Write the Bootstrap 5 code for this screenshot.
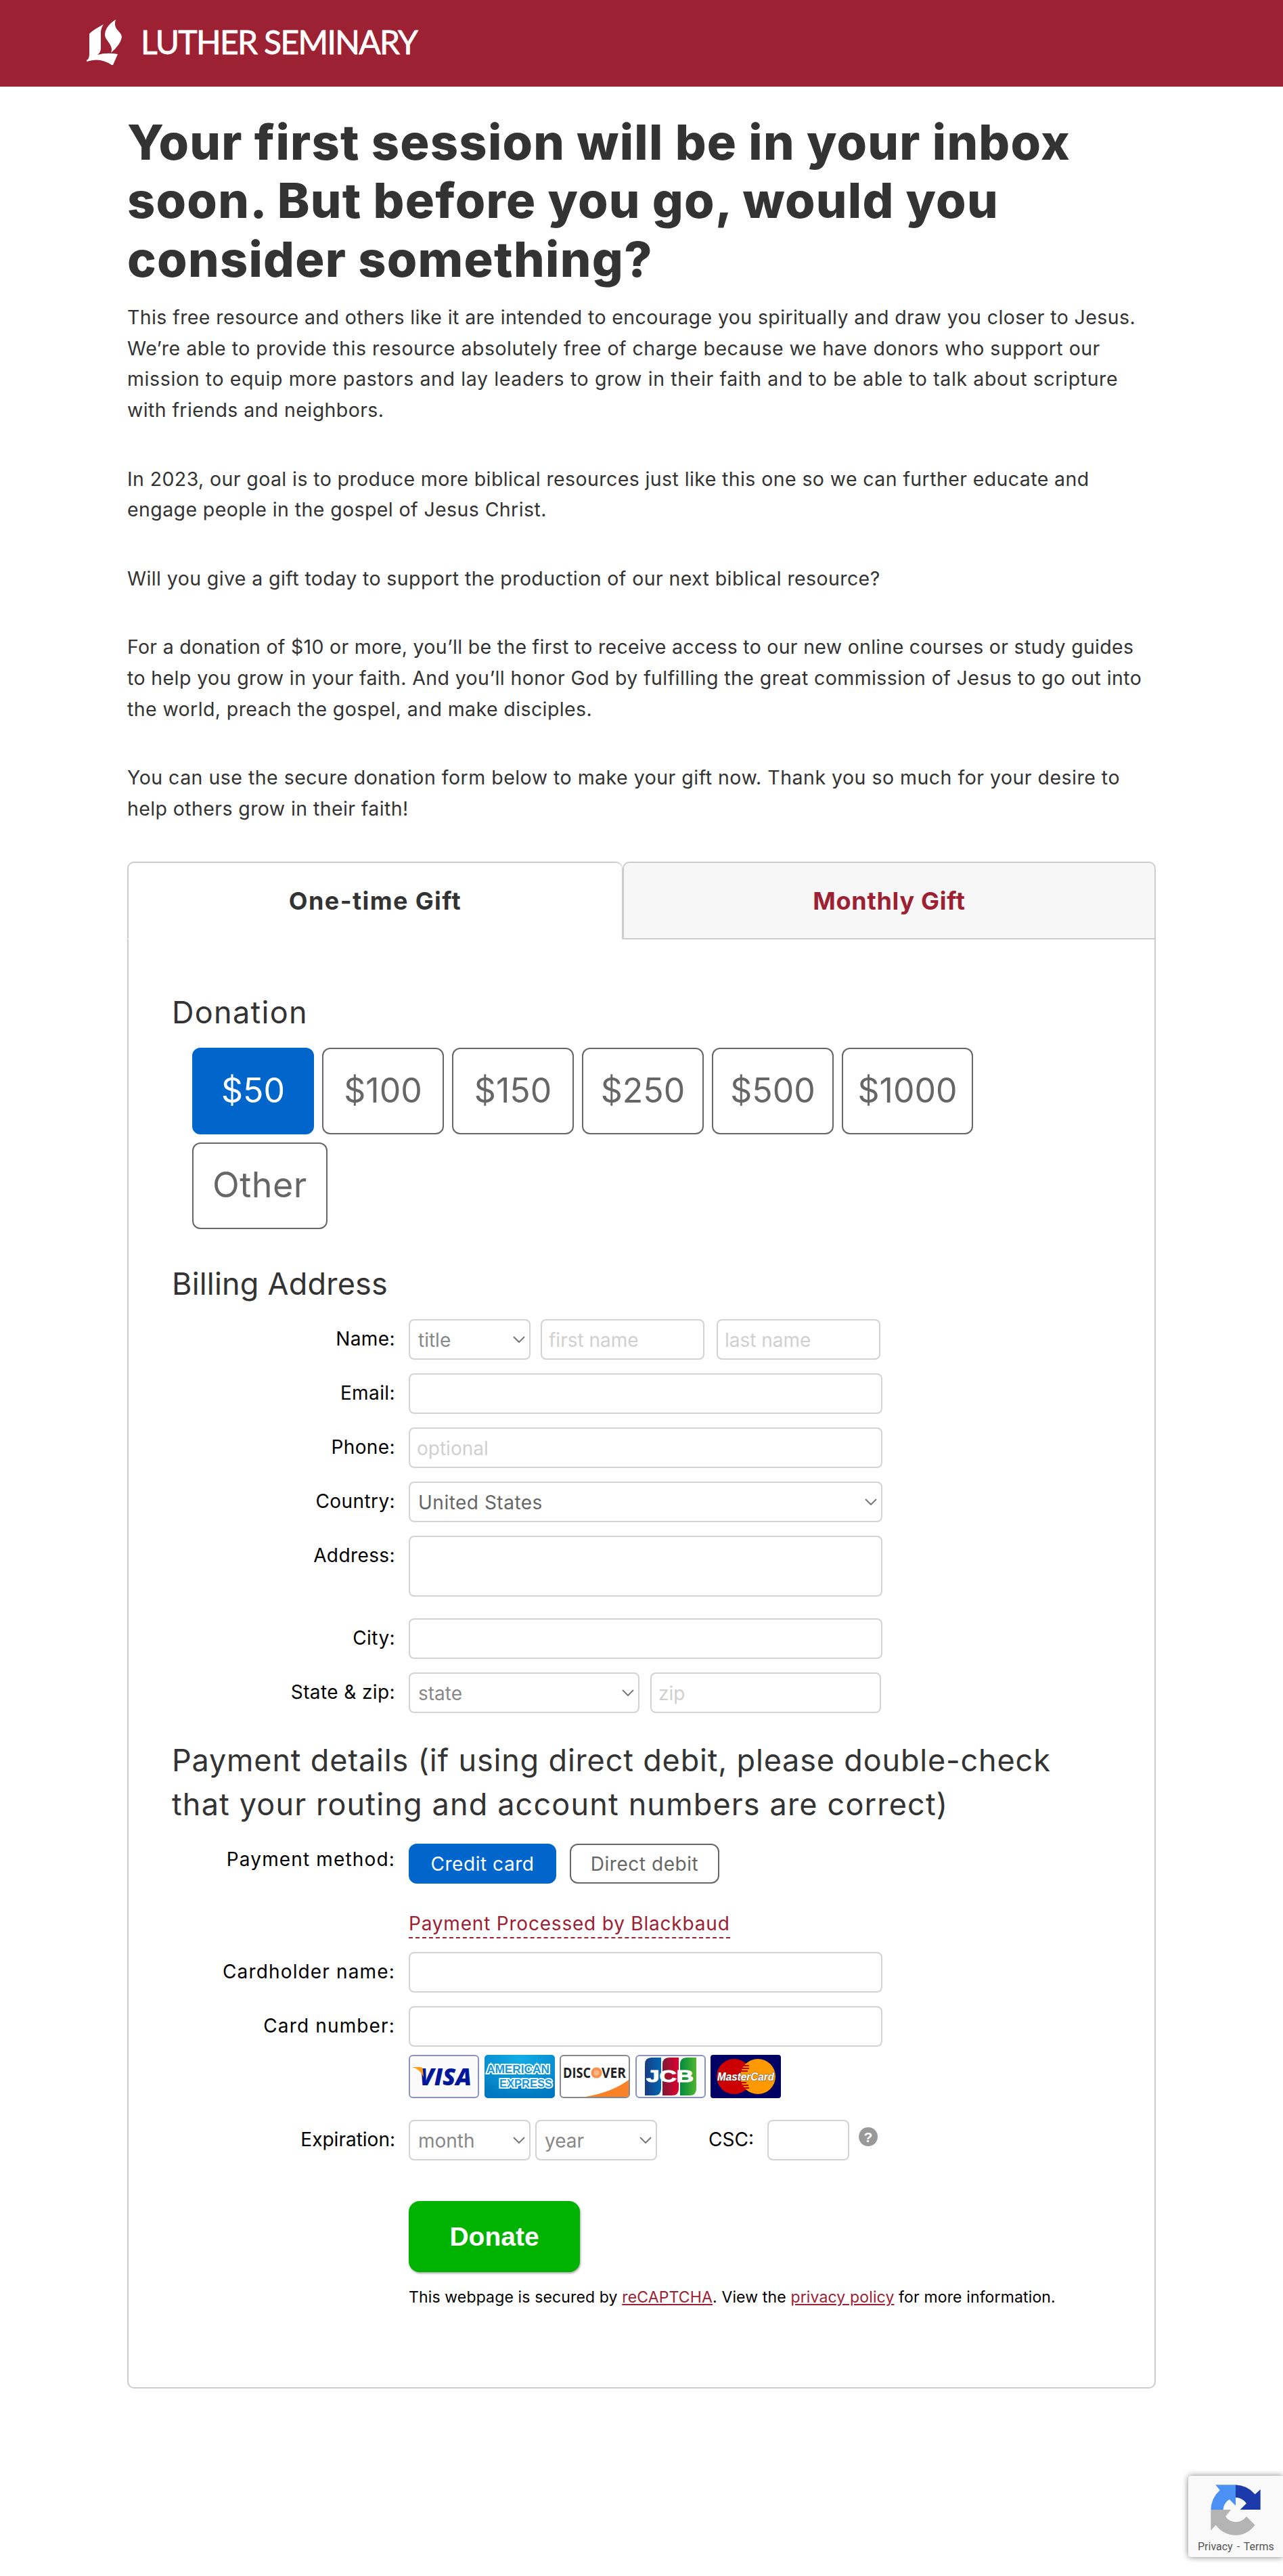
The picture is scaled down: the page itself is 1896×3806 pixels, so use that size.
<!DOCTYPE html>
<html lang="en">
<head>
  <meta charset="UTF-8" />
  <meta name="viewport" content="width=device-width, initial-scale=1.0"/>
  <title>Luther Seminary - Donate</title>
  <link href="https://cdn.jsdelivr.net/npm/bootstrap@5.3.2/dist/css/bootstrap.min.css" rel="stylesheet" />
  <style>
    body {
      font-family: Inter, "Open Sans", sans-serif;
      font-size: 28px;
      color: #333;
      background: #fff;
      min-height: 3806px;
    }
    a { color: #9b2133; }
    .site-header { background: #9b2133; height: 128px; padding-left: 128px; }
    .page { width: 1520px; margin-left: 188px; padding-top: 39px; }
    h1 {
      font-size: 72px;
      font-weight: 800;
      letter-spacing: 1.25px;
      line-height: 86.4px;
      margin-bottom: 20px;
      white-space: nowrap;
    }
    .intro { height: 827px; }
    .intro p {
      font-size: 28.5px;
      line-height: 45.6px;
      letter-spacing: .4px;
      margin-bottom: 56px;
      white-space: nowrap;
    }
    .intro .tight { letter-spacing: .29px; }
    .intro .loose { letter-spacing: .49px; }
    .intro .looser { letter-spacing: .62px; }

    /* gift tabs */
    .gift-tab {
      height: 115px;
      border: 2px solid #ccc;
      border-radius: 10px 10px 0 0;
      font-size: 36px;
      font-weight: 700;
      text-decoration: none;
    }
    .gift-tab.current {
      width: 732px;
      color: #333;
      letter-spacing: 1.4px;
      border-bottom-color: #fff;
      border-right-width: 1px;
    }
    .gift-tab.other { width: 788px; background: #f7f7f7; letter-spacing: .7px; }
    .gift-panel {
      border: 2px solid #ccc;
      border-top: 0;
      border-radius: 0 0 10px 10px;
      height: 2141px;
      padding: 75px 64px 0;
    }
    h2 {
      font-size: 45px;
      font-weight: 400;
      letter-spacing: .82px;
      line-height: 65px;
      margin: 0;
      white-space: nowrap;
    }
    h2 .second-line { letter-spacing: 1.15px; }
    .donation-title { letter-spacing: 1.3px; }
    .billing-title { letter-spacing: .2px; margin: 48px 0 20px; }
    .payment-title { margin: 37px 0 26px; }

    .amounts { gap: 12px; padding: 20px 0 0 30px; width: 1222px; }
    .amount {
      height: 128px;
      min-width: 180px;
      border: 2px solid #666;
      border-radius: 12px;
      font-size: 50px;
      color: #666;
      background: #fff;
      padding: 0 0 2px;
    }
    .amount.picked, .method.picked { background: #06c; border-color: #06c; color: #fff; }
    .amount.wide { width: 194px; }
    .amount.last { width: 200px; font-size: 52px; letter-spacing: .5px; }

    /* form rows */
    .field-row { margin-bottom: 20px; height: 60px; }
    .field-row.tall { height: 102px; }
    .field-label {
      width: 330px;
      margin-right: 20px;
      text-align: right;
      line-height: 59px;
      letter-spacing: .4px;
      color: #000;
      white-space: nowrap;
      flex: none;
    }
    .payment .wide-label { letter-spacing: 1.15px; }
    .payment .exp-label { letter-spacing: 0; }
    .form-control, .form-select {
      height: 60px;
      width: 700px;
      border: 2px solid #d3d3d3;
      border-radius: 8px;
      font-size: 28px;
      padding: 2px 10px 0;
      flex: none;
    }
    .form-control::placeholder { color: #d0d0d0; opacity: 1; }
    .form-select {
      color: #888;
      padding-left: 12px;
      background-image: url("data:image/svg+xml,%3csvg xmlns='http://www.w3.org/2000/svg' viewBox='0 0 18 10'%3e%3cpath d='M1 1l8 8 8-8' fill='none' stroke='%23777' stroke-width='2'/%3e%3c/svg%3e");
      background-size: 18px 10px;
      background-position: right 6px center;
    }
    .form-select.filled { color: #666; letter-spacing: .5px; }
    textarea.form-control { height: 90px; resize: none; }
    .w-title { width: 180px; }
    .w-name { width: 242px; }
    .w-state { width: 341px; }
    .w-csc { width: 121px; }
    .gap-field { margin-left: 15px; }
    .gap-zip { margin-left: 16px; }
    .gap-last { margin-left: 18px; }
    .gap-year { margin-left: 7px; }

    .method-row { margin-bottom: 38px; }
    .method-row .field-label { line-height: 47px; }
    .method {
      width: 218px;
      height: 59px;
      margin-right: 20px;
      border: 2px solid #666;
      border-radius: 12px;
      background: #fff;
      color: #666;
      padding: 0;
      font-size: 28px;
      letter-spacing: .55px;
    }
    .method.debit { width: 221px; }
    .processed {
      border-bottom: 2px dashed #9b2133;
      text-decoration: none;
      line-height: 40px;
      letter-spacing: .8px;
    }
    .under-label { margin-left: 350px; }
    .processed-row { margin-bottom: 20px; }
    .card-icons { gap: 7.5px; margin-top: -8px; margin-bottom: 32px; }
    .csc-label { width: 143px; }
    .help-icon { margin: 11px 0 0 14px; }
    .donate {
      width: 253px;
      height: 105px;
      margin-top: 60px;
      border: 0;
      border-radius: 16px;
      background: #00b300;
      color: #fff;
      font: bold 39px "Liberation Sans", sans-serif;
      box-shadow: 1px 2px 3px rgba(0, 0, 0, .35);
    }
    .secured {
      font-size: 23px;
      letter-spacing: .14px;
      color: #000;
      white-space: nowrap;
      line-height: 36px;
      margin-top: 19px;
    }

    .recaptcha {
      position: absolute;
      left: 1756px;
      top: 3658px;
      width: 140px;
      height: 120px;
      border-radius: 4px 0 0 4px;
      background: #f9f9f9;
      box-shadow: 0 0 10px #808080;
      font: 16px/20px Roboto, sans-serif;
      color: #555;
      padding: 13px 0 0 14px;
      white-space: nowrap;
      word-spacing: 2px;
    }
    .recaptcha svg { margin: 0 0 7px 19px; }
  </style>
</head>
<body class="position-relative overflow-x-hidden">

<header class="site-header d-flex align-items-center">
  <svg width="500" height="128" viewBox="0 0 500 128" fill="#fff">
    <!-- book and flame -->
    <path d="M4 50Q8 45 25 36Q21 42 21 48V72Q21 77 16 81Q30 77 46 80L39 96H37Q20 84 0 91V89Q4 87 4 80Z"/>
    <path d="M43 29Q28 38 27 51C27 60 41 67 36 78Q50 66 52 55C52 46 38 44 43 29Z"/>
    <text x="80" y="80" font-family="Lato, sans-serif" font-size="48" stroke="#fff" stroke-width=".8" textLength="410">LUTHER SEMINARY</text>
  </svg>
</header>

<main class="page">
  <h1>Your first session will be in your inbox<br>soon. But before you go, would you<br>consider something?</h1>

  <div class="intro">
    <p>This free resource and others like it are intended to encourage you spiritually and draw you closer to Jesus.<br><span class="loose">We’re able to provide this resource absolutely free of charge because we have donors who support our</span><br><span class="looser">mission to equip more pastors and lay leaders to grow in their faith and to be able to talk about scripture</span><br>with friends and neighbors.</p>
    <p>In 2023, our goal is to produce more biblical resources just like this one so we can further educate and<br>engage people in the gospel of Jesus Christ.</p>
    <p>Will you give a gift today to support the production of our next biblical resource?</p>
    <p><span class="tight">For a donation of $10 or more, you’ll be the first to receive access to our new online courses or study guides</span><br>to help you grow in your faith. And you’ll honor God by fulfilling the great commission of Jesus to go out into<br>the world, preach the gospel, and make disciples.</p>
    <p><span class="loose">You can use the secure donation form below to make your gift now. Thank you so much for your desire to</span><br>help others grow in their faith!</p>
  </div>

  <!-- Gift tabs -->
  <div class="d-flex">
    <a class="gift-tab current d-flex align-items-center justify-content-center">One-time Gift</a>
    <a href="#" class="gift-tab other d-flex align-items-center justify-content-center">Monthly Gift</a>
  </div>

  <form class="gift-panel">
    <h2 class="donation-title">Donation</h2>
    <div class="amounts d-flex flex-wrap">
      <button type="button" class="amount picked">$50</button>
      <button type="button" class="amount">$100</button>
      <button type="button" class="amount">$150</button>
      <button type="button" class="amount">$250</button>
      <button type="button" class="amount">$500</button>
      <button type="button" class="amount wide">$1000</button>
      <button type="button" class="amount last">Other</button>
    </div>

    <!-- Billing -->
    <h2 class="billing-title">Billing Address</h2>
    <div class="field-row d-flex">
      <label class="field-label">Name:</label>
      <select class="form-select w-title"><option>title</option></select>
      <input class="form-control w-name gap-field" placeholder="first name">
      <input class="form-control w-name gap-last" placeholder="last name">
    </div>
    <div class="field-row d-flex">
      <label class="field-label">Email:</label>
      <input class="form-control">
    </div>
    <div class="field-row d-flex">
      <label class="field-label">Phone:</label>
      <input class="form-control" placeholder="optional">
    </div>
    <div class="field-row d-flex">
      <label class="field-label">Country:</label>
      <select class="form-select filled"><option>United States</option></select>
    </div>
    <div class="field-row tall d-flex">
      <label class="field-label">Address:</label>
      <textarea class="form-control"></textarea>
    </div>
    <div class="field-row d-flex">
      <label class="field-label">City:</label>
      <input class="form-control">
    </div>
    <div class="field-row d-flex">
      <label class="field-label">State &amp; zip:</label>
      <select class="form-select w-state"><option>state</option></select>
      <input class="form-control w-state gap-zip" placeholder="zip">
    </div>

    <!-- Payment -->
    <h2 class="payment-title">Payment details (if using direct debit, please double-check<br><span class="second-line">that your routing and account numbers are correct)</span></h2>
    <div class="payment">
      <div class="field-row method-row d-flex">
        <label class="field-label wide-label">Payment method:</label>
        <button type="button" class="method picked">Credit card</button>
        <button type="button" class="method debit">Direct debit</button>
      </div>
      <div class="under-label processed-row d-flex">
        <a href="#" class="processed">Payment Processed by Blackbaud</a>
      </div>
      <div class="field-row d-flex">
        <label class="field-label wide-label">Cardholder name:</label>
        <input class="form-control">
      </div>
      <div class="field-row d-flex">
        <label class="field-label wide-label">Card number:</label>
        <input class="form-control">
      </div>

      <div class="under-label card-icons d-flex">
        <svg width="104" height="64" viewBox="0 0 104 64">
          <rect x="1" y="1" width="102" height="62" rx="5" fill="#fafafa" stroke="#8a93bb" stroke-width="2"/>
          <text x="16" y="45" font-family="Open Sans, sans-serif" font-size="36" font-weight="800" font-style="italic" fill="#00179a" textLength="77" lengthAdjust="spacingAndGlyphs">VISA</text>
          <path d="M5 18H17Q21 18 21 23L22 33Q17 21 5 18Z" fill="#f99d1c"/>
        </svg>
        <svg width="104" height="64" viewBox="0 0 104 64">
          <defs>
            <radialGradient id="amex" cx=".5" cy=".1" r=".9"><stop offset="0" stop-color="#12aee8"/><stop offset="1" stop-color="#0077c0"/></radialGradient>
          </defs>
          <rect width="104" height="64" rx="5" fill="url(#amex)"/>
          <g font-family="Liberation Sans, sans-serif" font-size="16" font-weight="bold" fill="#1597d7" stroke="#fff" stroke-width="3.5" paint-order="stroke">
            <text x="3" y="27" textLength="93" lengthAdjust="spacingAndGlyphs">AMERICAN</text>
            <text x="22" y="48" textLength="78" lengthAdjust="spacingAndGlyphs">EXPRESS</text>
          </g>
        </svg>
        <svg width="104" height="64" viewBox="0 0 104 64">
          <rect x="1" y="1" width="102" height="62" rx="5" fill="#fff" stroke="#888" stroke-width="2"/>
          <path d="M38 62Q78 55 102 37V58Q102 62 98 62Z" fill="#f98128"/>
          <circle cx="54.500" cy="26.500" r="8" fill="#f9914c"/>
          <circle cx="54.500" cy="26.500" r="4" fill="#fbb78b"/>
          <g font-family="Open Sans, sans-serif" font-size="21" font-weight="700" fill="#222">
            <text x="5" y="34" textLength="41" lengthAdjust="spacingAndGlyphs">DISC</text>
            <text x="62" y="34" textLength="36" lengthAdjust="spacingAndGlyphs">VER</text>
          </g>
        </svg>
        <svg width="104" height="64" viewBox="0 0 104 64">
          <defs>
            <linearGradient id="jcbBlue"><stop offset="0" stop-color="#1a3b80"/><stop offset="1" stop-color="#0066b3"/></linearGradient>
            <linearGradient id="jcbRed"><stop offset="0" stop-color="#7d1a34"/><stop offset="1" stop-color="#e0002f"/></linearGradient>
            <linearGradient id="jcbGreen"><stop offset="0" stop-color="#008a3e"/><stop offset="1" stop-color="#50b52f"/></linearGradient>
          </defs>
          <rect x="1" y="1" width="102" height="62" rx="5" fill="#fafafa" stroke="#8a93bb" stroke-width="2"/>
          <path d="M14 14Q14 4 24 4H38V50Q38 60 28 60H14Z" fill="url(#jcbBlue)"/>
          <path d="M40 14Q40 4 50 4H64V50Q64 60 54 60H40Z" fill="url(#jcbRed)"/>
          <path d="M66 14Q66 4 76 4H90V50Q90 60 80 60H66Z" fill="url(#jcbGreen)"/>
          <text x="16" y="40" font-family="Liberation Sans, sans-serif" font-size="24" font-weight="bold" fill="#fff" stroke="#fff" textLength="70" lengthAdjust="spacingAndGlyphs">JCB</text>
        </svg>
        <svg width="104" height="64" viewBox="0 0 104 64">
          <rect width="104" height="64" rx="4" fill="#000064"/>
          <circle cx="35" cy="32" r="26" fill="#c00"/>
          <circle cx="70" cy="32" r="26" fill="#f90"/>
          <path d="M48 16H57M46 20H57M44 24H55M44 41H53M44 45H56M47 49H57" stroke="#c00" stroke-width="2"/>
          <text x="10" y="38" font-family="Liberation Sans, sans-serif" font-size="17" font-weight="bold" font-style="italic" fill="#fff" stroke="#555" stroke-width="1" paint-order="stroke" textLength="84" lengthAdjust="spacingAndGlyphs">MasterCard</text>
        </svg>
      </div>

      <div class="field-row d-flex">
        <label class="field-label exp-label">Expiration:</label>
        <select class="form-select w-title"><option>month</option></select>
        <select class="form-select w-title gap-year"><option>year</option></select>
        <label class="field-label exp-label csc-label">CSC:</label>
        <input class="form-control w-csc">
        <svg class="help-icon" width="28" height="28" viewBox="0 0 28 28">
          <circle cx="14" cy="14" r="14" fill="#999"/>
          <text x="14" y="21.500" text-anchor="middle" font-family="Liberation Sans, sans-serif" font-size="21" font-weight="bold" fill="#fff">?</text>
        </svg>
      </div>
    </div>

    <div class="under-label">
      <button type="button" class="donate d-block">Donate</button>
      <div class="secured">This webpage is secured by <a href="#">reCAPTCHA</a>. View the <a href="#">privacy policy</a> for more information.</div>
    </div>
  </form>
</main>

<div class="recaptcha">
  <svg class="d-block" width="74" height="75" viewBox="207 123 222 225">
    <path d="M229 124H318V216L290 188Q264 206 263 234H208Q210 182 248 148Z" fill="#4a90f5"/>
    <path d="M318 124Q370 126 404 166L428 144V234H338L366 206Q346 180 318 180Z" fill="#1c3aa9"/>
    <path d="M208 234H298L273 264Q290 289 318 289Q348 288 366 264L404 302Q370 346 318 347Q264 346 230 302L208 326Z" fill="#b4b4b4"/>
  </svg>
  Privacy - Terms
</div>

<script src="https://cdn.jsdelivr.net/npm/bootstrap@5.3.2/dist/js/bootstrap.bundle.min.js"></script>
</body>
</html>
